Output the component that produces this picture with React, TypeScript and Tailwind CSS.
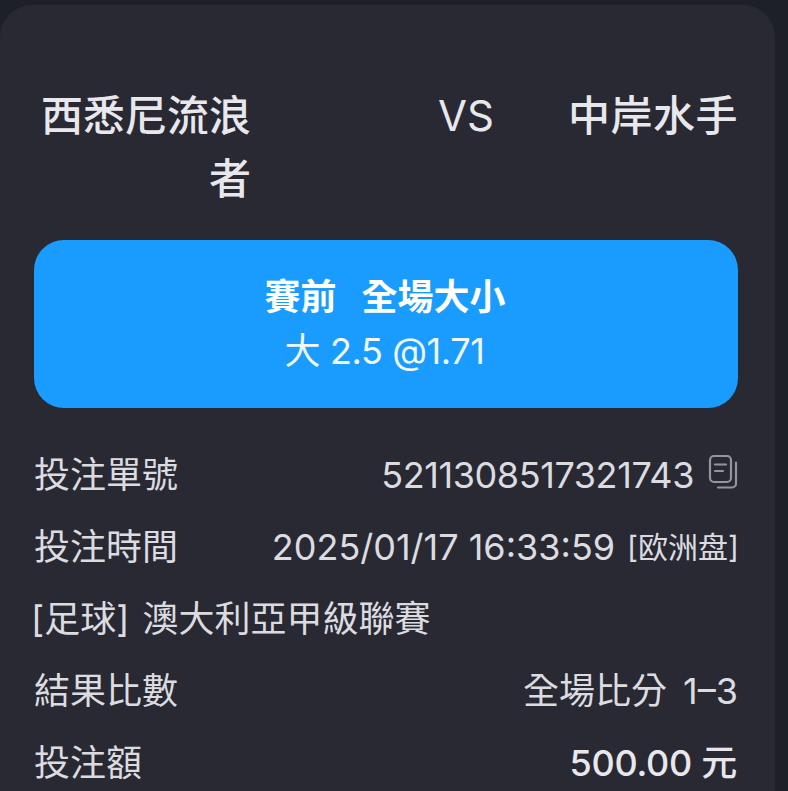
import React from 'react';

const font = { fontFamily: 'Inter, "Noto Sans CJK TC", sans-serif' };

function CopyIcon() {
  return (
    <svg width="30" height="36" viewBox="0 0 30 36" fill="none" className="ml-[14px] mb-[6px] text-[#93959d]" stroke="currentColor" strokeLinecap="round">
      <rect x="2" y="2" width="21" height="26" rx="4" strokeWidth="2.200" />
      <path d="M7 10.500h11M7 17h8" strokeWidth="2.200" />
      <path d="M28 8.500v21a4 4 0 0 1-4 4H10" strokeWidth="2.200" />
    </svg>
  );
}

function Row({ label, children }: { label: React.ReactNode; children?: React.ReactNode }) {
  return (
    <div className="flex h-[72px] items-center justify-between whitespace-nowrap">
      <span>{label}</span>
      <div className="flex items-center">{children}</div>
    </div>
  );
}

export default function App() {
  return (
    <div style={font} className="h-[791px] w-[788px] overflow-hidden bg-[#1e2028] pt-[5px]">
      <div className="h-[830px] w-[775px] rounded-tl-[32px] rounded-tr-[32px] bg-[#282932] px-[34px] pt-[79px] text-[36px] leading-[48px] text-[#dcdce0]">
        <div className="flex items-start pl-[5px] text-[42px] font-medium leading-[63px] text-[#e8e8ec]">
          <div className="w-[212px] text-right">西悉尼流浪者</div>
          <div className="ml-[187px] w-[56px] text-center font-normal">VS</div>
          <div className="ml-[74px] whitespace-nowrap tracking-[0.5px]">中岸水手</div>
        </div>
        <div className="mt-[30px] flex h-[168px] w-[704px] flex-col items-center justify-center rounded-[30px] bg-[#1a9cff] text-white">
          <div className="mr-[2px] whitespace-pre font-bold leading-[54px] [word-spacing:4px]">賽前  全場大小</div>
          <div className="mr-[3px] leading-[54px] tracking-[-0.4px] text-[#f0f8ff]">大 2.5 @1.71</div>
        </div>
        <div className="mt-[31px] w-[704px]">
          <Row label="投注單號">
            <span className="tracking-[-0.4px]">5211308517321743</span>
            <CopyIcon />
          </Row>
          <Row label="投注時間">
            <span>2025/01/17 16:33:59</span>
            <span className="-mr-[1px] ml-[12px] text-[30px]">[欧洲盘]</span>
          </Row>
          <Row label={<span className="-ml-[3px] [word-spacing:3px]">[足球] 澳大利亞甲級聯賽</span>} />
          <Row label="結果比數">
            <span className="[word-spacing:6px]">全場比分 1–3</span>
          </Row>
          <Row label="投注額">
            <span className="mr-[1px] font-medium tracking-[-0.3px] text-[#e8e8ec]">500.00 元</span>
          </Row>
        </div>
      </div>
    </div>
  );
}
